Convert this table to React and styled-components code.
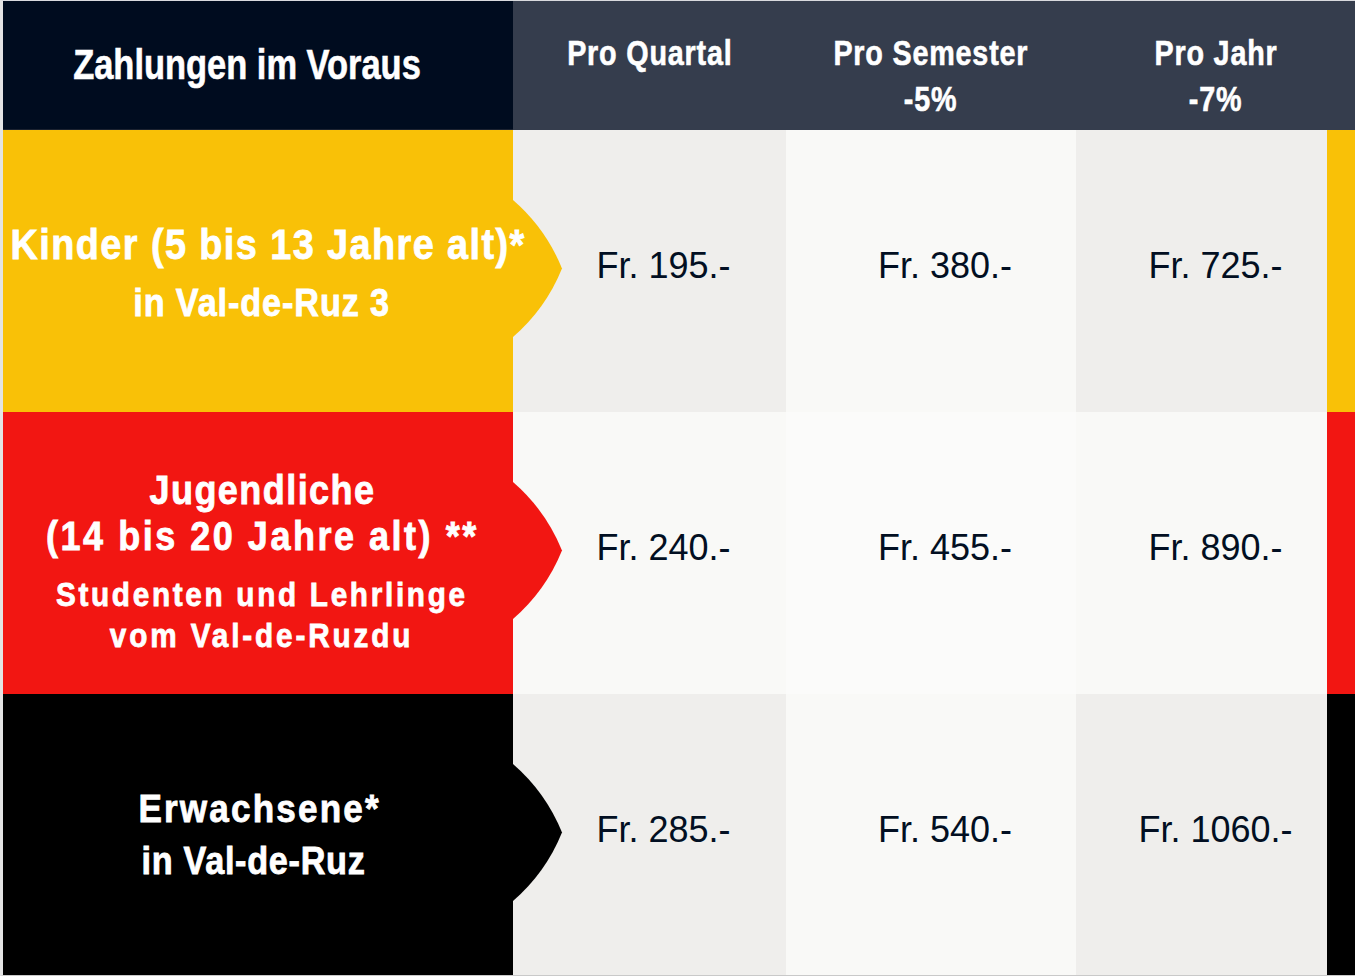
import styled, { createGlobalStyle } from "styled-components";

const GlobalStyle = createGlobalStyle`
  html, body {
    margin: 0;
    padding: 0;
    background: #ffffff;
  }
  body {
    font-family: "Liberation Sans", Arial, sans-serif;
  }
`;

// size / line-height / letter-spacing per line, tuned to the condensed look
const rows = [
  {
    color: "#f9c107",
    shades: ["#efeeec", "#f9f9f7", "#efeeec"],
    offset: 6,
    lines: [
      { text: "Kinder (5 bis 13 Jahre alt)*", size: 42, lh: 58, ls: 1.6, dx: 12 },
      { text: "in Val-de-Ruz 3", size: 38, lh: 58, ls: 1 },
    ],
    prices: ["Fr. 195.-", "Fr. 380.-", "Fr. 725.-"],
  },
  {
    color: "#f21612",
    shades: ["#f9f9f7", "#fbfbfa", "#f9f9f7"],
    offset: 16,
    lines: [
      { text: "Jugendliche", size: 40, lh: 46, ls: 1.6 },
      { text: "(14 bis 20 Jahre alt) **", size: 40, lh: 46, ls: 2.8 },
      { text: "Studenten und Lehrlinge", size: 33, lh: 41, ls: 3, gap: 15 },
      { text: "vom Val-de-Ruzdu", size: 33, lh: 41, ls: 3.2 },
    ],
    prices: ["Fr. 240.-", "Fr. 455.-", "Fr. 890.-"],
  },
  {
    color: "#000000",
    shades: ["#efeeec", "#f9f9f7", "#efeeec"],
    offset: 0,
    lines: [
      { text: "Erwachsene*", size: 39, lh: 52, ls: 2.4, dx: -4 },
      { text: "in Val-de-Ruz", size: 38, lh: 52, ls: 0.8, dx: -18 },
    ],
    prices: ["Fr. 285.-", "Fr. 540.-", "Fr. 1060.-"],
  },
];

function Arrow({ color }) {
  return (
    <ArrowSvg width="50" height="137" viewBox="0 0 50 137">
      <path
        d="M0,0 A180,180 0 0 1 49,68.5 A180,180 0 0 1 0,137 Z"
        fill={color}
      />
    </ArrowSvg>
  );
}

function App() {
  return (
    <>
      <GlobalStyle />
      <Table>
        <HeadLabel>
          <Narrow>Zahlungen im Voraus</Narrow>
        </HeadLabel>
        <HeadCell>
          <Narrow>Pro Quartal</Narrow>
        </HeadCell>
        <HeadCell>
          <Narrow>Pro Semester</Narrow>
          <Narrow>-5%</Narrow>
        </HeadCell>
        <HeadCell $span={2}>
          <Narrow>Pro Jahr</Narrow>
          <Narrow>-7%</Narrow>
        </HeadCell>

        {rows.map((row, i) => (
          <Row key={i}>
            <LabelCell $color={row.color} $offset={row.offset}>
              <Arrow color={row.color} />
              {row.lines.map((l, j) => (
                <LabelLine
                  key={j}
                  $size={l.size}
                  $lh={l.lh}
                  $ls={l.ls}
                  $gap={l.gap || 0}
                  $dx={l.dx || 0}
                >
                  {l.text}
                </LabelLine>
              ))}
            </LabelCell>
            {row.prices.map((p, j) => (
              <PriceCell key={j} $bg={row.shades[j]}>
                {p}
              </PriceCell>
            ))}
            <Strip $color={row.color} />
          </Row>
        ))}
      </Table>
    </>
  );
}

const Table = styled.div`
  display: grid;
  grid-template-columns: 510px 273px 290px 251px 28px;
  grid-template-rows: 129px 282px 282px 281px;
  width: 1352px;
  border-left: 3px solid #e4e4e4;
  border-top: 1px solid #d9dade;
  border-bottom: 1px solid #c9c9c9;
`;

const Narrow = styled.span`
  display: block;
  white-space: nowrap;
  transform: scaleX(0.82);
  transform-origin: center;
  -webkit-text-stroke: 0.6px #ffffff;
`;

const HeadLabel = styled.div`
  background: #000c1f;
  border-bottom: 1px solid #1b2230;
  display: flex;
  align-items: center;
  justify-content: center;
  padding-right: 22px;
  font-size: 42px;
  font-weight: 700;
  color: #ffffff;
`;

const HeadCell = styled.div`
  background: #353d4d;
  grid-column: span ${(p) => p.$span || 1};
  display: flex;
  flex-direction: column;
  align-items: center;
  padding-top: 29px;
  font-size: 35px;
  line-height: 46px;
  letter-spacing: 1px;
  font-weight: 700;
  color: #ffffff;
`;

const Row = styled.div`
  display: contents;
`;

const LabelCell = styled.div`
  position: relative;
  z-index: 1;
  background: ${(p) => p.$color};
  display: flex;
  flex-direction: column;
  align-items: center;
  justify-content: center;
  padding-left: 8px;
  padding-top: ${(p) => p.$offset}px;
  font-weight: 700;
  color: #ffffff;
`;

const LabelLine = styled.div`
  position: relative;
  white-space: nowrap;
  font-size: ${(p) => p.$size}px;
  line-height: ${(p) => p.$lh}px;
  letter-spacing: ${(p) => p.$ls}px;
  margin-top: ${(p) => p.$gap}px;
  margin-left: ${(p) => p.$dx}px;
  transform: scaleX(0.9);
  transform-origin: center;
  -webkit-text-stroke: 0.8px #ffffff;
`;

const ArrowSvg = styled.svg`
  position: absolute;
  left: 100%;
  top: 70px;
  display: block;
`;

const PriceCell = styled.div`
  background: ${(p) => p.$bg};
  display: flex;
  align-items: center;
  justify-content: center;
  padding-left: 28px;
  padding-bottom: 10px;
  font-family: "Liberation Sans", Arial, sans-serif;
  font-size: 36px;
  color: #020f22;
`;

const Strip = styled.div`
  background: ${(p) => p.$color};
`;

export default App;
